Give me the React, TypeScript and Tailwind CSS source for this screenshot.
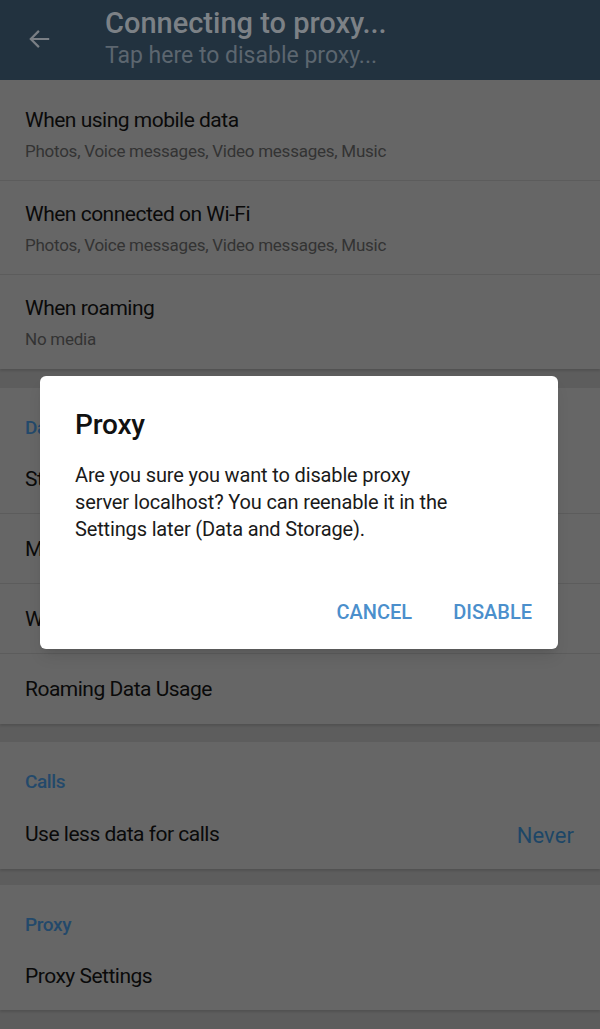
import React from "react";

const font = { fontFamily: "Roboto, 'Liberation Sans', sans-serif" };

function Row({ title, sub, last, first }: { title: string; sub?: string; last?: boolean; first?: boolean }) {
  return (
    <div
      className={`flex flex-col justify-center pl-[25px] ${sub ? (first ? "h-[101px] pt-[7px]" : "h-[94px]") : "h-[70px]"} ${last ? "" : "border-b border-[#5c5c5c]"}`}
    >
      <div className="text-[21px] leading-[26px] tracking-[-0.5px] text-[#0a0a0a]">{title}</div>
      {sub && <div className="mt-[8px] text-[17px] leading-[20px] tracking-[-0.25px] text-[#333333]">{sub}</div>}
    </div>
  );
}

function Header({ text }: { text: string }) {
  return (
    <div className="h-[56px] pl-[25px] pt-[29px] text-[19px] font-medium leading-[22px] tracking-[-0.4px] text-[#23496b]">
      {text}
    </div>
  );
}

export default function App() {
  return (
    <div className="relative h-[1029px] w-[600px] overflow-hidden bg-[#5d5d5d]" style={font}>
      <div className="flex h-[80px] items-center bg-[#22323f]">
        <div className="flex w-[80px] justify-center">
          <svg width="26" height="26" viewBox="0 0 24 24" className="-mt-[2px]">
            <path d="M20.5 12H3.5M11 4.5L3.5 12l7.5 7.5" stroke="#7a7f85" strokeWidth="2" fill="none" />
          </svg>
        </div>
        <div className="ml-[25px] flex flex-col">
          <div className="-mt-[4px] text-[29px] font-medium leading-[32px] text-[#7c8186]">Connecting to proxy...</div>
          <div className="mt-[4px] text-[23px] leading-[26px] text-[#5c666f]">Tap here to disable proxy...</div>
        </div>
      </div>

      <div className="bg-[#666666] shadow-[0_2px_2px_rgba(0,0,0,0.12)]">
        <Row first title="When using mobile data" sub="Photos, Voice messages, Video messages, Music" />
        <Row title="When connected on Wi-Fi" sub="Photos, Voice messages, Video messages, Music" />
        <Row title="When roaming" sub="No media" last />
      </div>

      <div className="h-[19px]" />

      <div className="bg-[#666666] shadow-[0_2px_2px_rgba(0,0,0,0.12)]">
        <Header text="Data Usage" />
        <Row title="Storage Usage" />
        <Row title="Mobile Data Usage" />
        <Row title="WiFi Data Usage" />
        <Row title="Roaming Data Usage" last />
      </div>

      <div className="h-[18px]" />

      <div className="bg-[#666666] shadow-[0_2px_2px_rgba(0,0,0,0.12)]">
        <Header text="Calls" />
        <div className="flex h-[71px] items-center justify-between pl-[25px] pr-[26px]">
          <div className="mt-[3px] text-[21px] tracking-[-0.5px] text-[#0a0a0a]">Use less data for calls</div>
          <div className="mt-[3px] text-[22px] tracking-[0.1px] text-[#1d4667]">Never</div>
        </div>
      </div>

      <div className="h-[16px]" />

      <div className="bg-[#666666] shadow-[0_2px_2px_rgba(0,0,0,0.12)]">
        <Header text="Proxy" />
        <div className="flex h-[69px] items-center pl-[25px]">
          <div className="mt-[3px] text-[21px] tracking-[-0.5px] text-[#0a0a0a]">Proxy Settings</div>
        </div>
      </div>

      <div className="absolute left-[40px] top-[376px] h-[273px] w-[518px] rounded-[6px] bg-white shadow-lg">
        <div className="px-[35px] pt-[31px]">
          <div className="text-[28px] font-medium leading-[36px] tracking-[-0.2px] text-[#111]">Proxy</div>
          <div className="mt-[19px] w-[385px] text-[20px] leading-[27px] tracking-[-0.15px] text-[#1a1a1a]">
            Are you sure you want to disable proxy server localhost? You can reenable it in the Settings later (Data and Storage).
          </div>
        </div>
        <div className="absolute bottom-[25px] right-[26px] flex gap-[41px] text-[20px] font-medium leading-[24px] text-[#4b8fcc]">
          <span>CANCEL</span>
          <span>DISABLE</span>
        </div>
      </div>
    </div>
  );
}
